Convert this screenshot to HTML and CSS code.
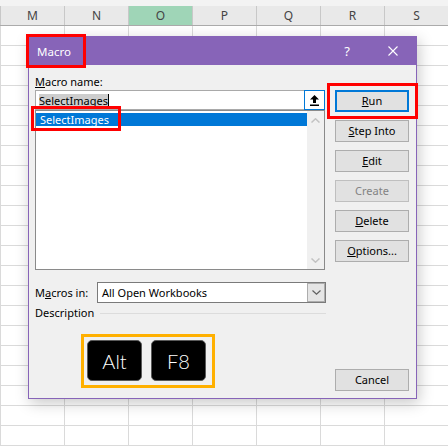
FILE: index.html
```html
<!DOCTYPE html>
<html lang="en">
<head>
    <meta charset="UTF-8">
    <title>Macro dialog</title>
    <link rel="stylesheet" href="styles.css">
</head>
<body>
    <div class="sheet">
        <div class="sheet-top"></div>
        <div class="col-heads">
            <div class="col-head">M</div>
            <div class="col-head">N</div>
            <div class="col-head selected">O</div>
            <div class="col-head">P</div>
            <div class="col-head">Q</div>
            <div class="col-head">R</div>
            <div class="col-head">S</div>
        </div>
        <div class="cells"></div>

        <!-- Macro dialog -->
        <div class="dialog">
            <div class="titlebar">
                <span class="title">Macro</span>
                <div class="title-controls">
                    <div class="title-btn help">?</div>
                    <div class="title-btn">
                        <svg width="10" height="10" viewBox="0 0 10 10">
                            <path d="M0.5 0.5 L9.5 9.5 M9.5 0.5 L0.5 9.5" stroke="#fff" stroke-width="1.1" fill="none"/>
                        </svg>
                    </div>
                </div>
            </div>

            <div class="dialog-body">
                <div class="left-col">
                    <div class="field-label"><u>M</u>acro name:</div>
                    <div class="name-row">
                        <div class="name-field"><span class="sel-text">SelectImages</span></div>
                        <div class="arrow-btn">
                            <svg width="9" height="11" viewBox="0 0 9 11">
                                <path d="M4.5 0 L9 4.5 L6 4.5 L6 8 L3 8 L3 4.5 L0 4.5 Z" fill="#000"/>
                                <rect x="0" y="9.5" width="9" height="1.5" fill="#000"/>
                            </svg>
                        </div>
                    </div>
                    <div class="macro-list">
                        <div class="list-items">
                            <div class="list-item active">SelectImages</div>
                        </div>
                        <div class="scrollbar">
                            <svg width="9" height="5" viewBox="0 0 9 5">
                                <polyline points="0.5,4.5 4.5,0.8 8.5,4.5" stroke="#c2c2c2" stroke-width="1.5" fill="none"/>
                            </svg>
                            <svg width="9" height="5" viewBox="0 0 9 5">
                                <polyline points="0.5,0.5 4.5,4.2 8.5,0.5" stroke="#c2c2c2" stroke-width="1.5" fill="none"/>
                            </svg>
                        </div>
                    </div>

                    <div class="macros-in">
                        <span class="macros-in-label">M<u>a</u>cros in:</span>
                        <div class="select">
                            <span class="select-value">All Open Workbooks</span>
                            <span class="select-btn">
                                <svg width="9" height="5" viewBox="0 0 9 5">
                                    <polyline points="0.5,0.5 4.5,4.2 8.5,0.5" stroke="#606060" stroke-width="1.2" fill="none"/>
                                </svg>
                            </span>
                        </div>
                    </div>

                    <div class="description">
                        <span>Description</span>
                        <span class="rule"></span>
                    </div>

                    <div class="keys">
                        <div class="key">Alt</div>
                        <div class="key">F8</div>
                    </div>
                </div>

                <div class="right-col">
                    <div class="btn default"><u>R</u>un</div>
                    <div class="btn"><u>S</u>tep Into</div>
                    <div class="btn"><u>E</u>dit</div>
                    <div class="btn disabled">Create</div>
                    <div class="btn"><u>D</u>elete</div>
                    <div class="btn"><u>O</u>ptions...</div>
                    <div class="btn cancel">Cancel</div>
                </div>
            </div>

            <!-- highlight marks -->
            <div class="mark mark-title"></div>
            <div class="mark mark-item"></div>
            <div class="mark mark-run"></div>
        </div>
    </div>
</body>
</html>
```

FILE: styles.css
```css
* {
    box-sizing: border-box;
}

body {
    margin: 0;
    font-family: "Noto Sans", sans-serif;
    font-size: 11px;
    color: #000;
    background: #fff;
}

.sheet {
    position: relative;
    width: 448px;
    height: 446px;
    overflow: hidden;
    background: #fff;
}

.sheet-top {
    height: 6px;
    background: #f3f3f3;
}

.col-heads {
    display: flex;
    height: 20px;
    background: #e9e9e9;
    border-bottom: 1px solid #ababab;
}

.col-head {
    flex: none;
    width: 64px;
    border-left: 1px solid #c8c8c8;
    text-align: center;
    font-size: 12px;
    line-height: 19px;
    color: #444;
}

.col-head.selected {
    background: #9fd5b7;
}

.cells {
    height: 420px;
    background-image:
        linear-gradient(to bottom, transparent 19px, #dadada 19px),
        linear-gradient(to right, #dadada 1px, transparent 1px);
    background-size: 100% 20px, 64px 100%;
}

/* dialog */

.dialog {
    position: absolute;
    left: 28px;
    top: 36px;
    width: 389px;
    height: 363px;
    display: flex;
    flex-direction: column;
    background: #f0f0f0;
    border: 1px solid #8764b8;
    box-shadow: 2px 4px 14px rgba(0, 0, 0, 0.22);
}

.titlebar {
    display: flex;
    align-items: center;
    height: 28px;
    padding-left: 8px;
    background: #8764b8;
    color: #fff;
    font-size: 11.5px;
}

.title-controls {
    display: flex;
    height: 100%;
    margin-left: auto;
}

.title-btn {
    display: flex;
    align-items: center;
    justify-content: center;
    width: 46px;
}

.title-btn.help {
    font-size: 13px;
}

.dialog-body {
    flex: 1;
    display: flex;
    gap: 9px;
    padding: 9px 7px 7px 6px;
}

.left-col {
    display: flex;
    flex-direction: column;
    width: 291px;
}

.field-label {
    line-height: 16px;
}

.name-row {
    display: flex;
    width: 290px;
    height: 20px;
}

.name-field {
    flex: 1;
    display: flex;
    align-items: center;
    padding-left: 3px;
    background: #fff;
    border: 1px solid #a9a9a9;
    border-right: none;
}

.sel-text {
    background: #cdcdcd;
    border-right: 1px solid #000;
    line-height: 13px;
}

.arrow-btn {
    display: flex;
    align-items: center;
    justify-content: center;
    width: 21px;
    background: #fff;
    border: 1px solid #0078d7;
}

.macro-list {
    display: flex;
    width: 290px;
    height: 160px;
    background: #fff;
    border: 1px solid #8a8a8a;
}

.list-items {
    flex: 1;
    padding-top: 2px;
}

.list-item {
    padding-left: 4px;
    line-height: 13px;
}

.list-item.active {
    background: #0078d7;
    color: #fff;
}

.scrollbar {
    display: flex;
    flex-direction: column;
    justify-content: space-between;
    align-items: center;
    width: 17px;
    padding: 7px 0 6px;
    background: #f0f0f0;
}

.macros-in {
    display: flex;
    align-items: center;
    height: 21px;
    margin-top: 12px;
}

.macros-in-label {
    width: 62px;
}

.select {
    flex: 1;
    display: flex;
    height: 100%;
    background: #fff;
    border: 1px solid #7a7a7a;
}

.select-value {
    flex: 1;
    padding-left: 4px;
    line-height: 19px;
}

.select-btn {
    display: flex;
    align-items: center;
    justify-content: center;
    width: 18px;
    background: #e5e5e5;
    border: 1px solid #adadad;
}

.description {
    display: flex;
    align-items: center;
    gap: 6px;
    margin-top: 2px;
    line-height: 16px;
}

.description .rule {
    flex: 1;
    border-top: 1px solid #dcdcdc;
}

.keys {
    display: flex;
    gap: 9px;
    align-self: flex-start;
    margin: 13px 0 0 46px;
    padding: 3px 6px 4px 3px;
    border: 3px solid #ffb000;
}

.key {
    display: flex;
    align-items: center;
    justify-content: center;
    width: 55px;
    height: 41px;
    background: #000;
    border: 1px solid #5a5a5a;
    border-radius: 5px;
    color: #fff;
    font-family: Lato, sans-serif;
    font-size: 20px;
    font-weight: 300;
}

.right-col {
    display: flex;
    flex-direction: column;
    gap: 8px;
    width: 74px;
    padding-top: 16px;
}

.btn {
    height: 22px;
    background: #e1e1e1;
    border: 1px solid #adadad;
    text-align: center;
    line-height: 20px;
}

.btn.default {
    border: 2px solid #0078d7;
    line-height: 18px;
}

.btn.disabled {
    color: #838383;
    border-color: #bfbfbf;
}

.btn.cancel {
    margin-top: auto;
}

/* red highlight marks */

.mark {
    position: absolute;
    border: 3px solid #ff0000;
}

.mark-title {
    left: -3px;
    top: -3px;
    width: 60px;
    height: 34px;
}

.mark-item {
    left: 2px;
    top: 69px;
    width: 90px;
    height: 25px;
}

.mark-run {
    left: 298px;
    top: 46px;
    width: 91px;
    height: 36px;
}
```
